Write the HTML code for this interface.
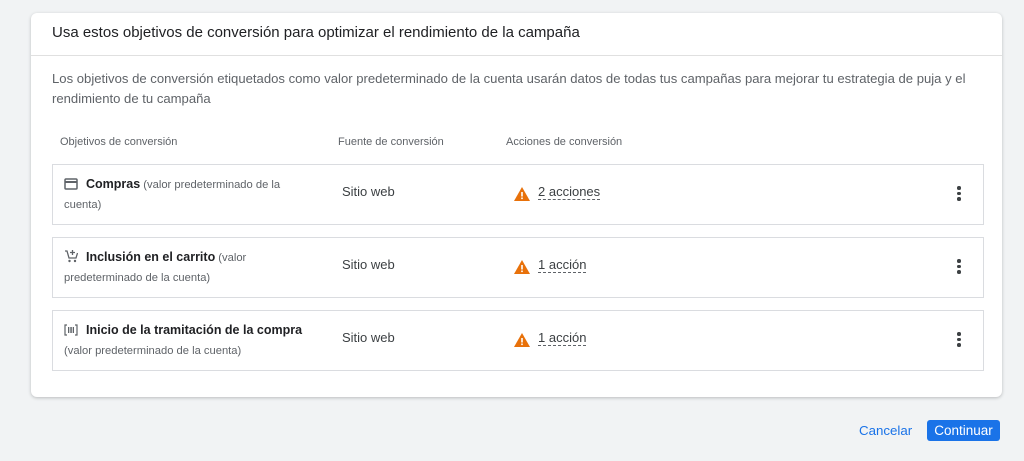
<!DOCTYPE html>
<html><head><meta charset="utf-8"><style>
*{margin:0;padding:0;box-sizing:border-box}
body{width:1024px;height:461px;background:#f1f3f4;font-family:"Liberation Sans",Arial,sans-serif;position:relative;overflow:hidden;color:#202124}
.card{position:absolute;left:31px;top:13px;width:971px;height:384px;background:#fff;border-radius:6px;box-shadow:0 1px 3px rgba(60,64,67,.3)}
.hdr{position:absolute;left:21px;top:11px;font-size:15px;color:#202124}
.sep{position:absolute;left:0;right:0;top:42px;border-top:1px solid #e0e0e0}
.desc{position:absolute;left:21px;top:56px;width:940px;font-size:13.1px;line-height:20px;color:#5f6368;white-space:nowrap}
.ch{position:absolute;top:123px;font-size:11px;color:#5f6368}
.row{position:absolute;left:21px;width:932px;height:61px;border:1px solid #dadce0}
.t{position:absolute;left:11px;top:9px;width:248px;font-size:11.2px;line-height:20px;color:#5f6368}
.t b{font-weight:bold;font-size:12.5px;color:#202124}
.src{position:absolute;left:289px;top:19px;font-size:13px;color:#3c4043}
.warn{position:absolute;left:461px;top:22px}
.act{position:absolute;left:485px;top:19px;font-size:13px;color:#3c4043;border-bottom:1px dashed #5f6368;line-height:15px}
.dots{position:absolute;left:904px;top:21px;width:4px}
.dots i{display:block;width:3.5px;height:3.5px;background:#3c4043;border-radius:50%;margin-bottom:2.2px}
.ic{display:inline-block;vertical-align:-2px;margin-right:8px}
</style></head><body>
<div class="card">
<div class="hdr">Usa estos objetivos de conversión para optimizar el rendimiento de la campaña</div>
<div class="sep"></div>
<div class="desc">Los objetivos de conversión etiquetados como valor predeterminado de la cuenta usarán datos de todas tus campañas para mejorar tu estrategia de puja y el<br>rendimiento de tu campaña</div>
<div class="ch" style="left:29px">Objetivos de conversión</div>
<div class="ch" style="left:307px">Fuente de conversión</div>
<div class="ch" style="left:475px">Acciones de conversión</div>

<div class="row" style="top:151px">
<div class="t"><svg class="ic" width="14" height="12" viewBox="0 0 14 12"><rect x="1" y="1" width="12" height="10" rx="1" fill="none" stroke="#5f6368" stroke-width="1.5"/><rect x="1" y="3" width="12" height="2" fill="#5f6368"/></svg><b>Compras</b> (valor predeterminado de la cuenta)</div>
<div class="src">Sitio web</div>
<svg class="warn" width="16" height="14" viewBox="0 0 16 14"><path d="M8 0L16 14H0Z" fill="#e8710a"/><rect x="7.2" y="5" width="1.6" height="4.5" fill="#fff"/><rect x="7.2" y="10.5" width="1.6" height="1.6" fill="#fff"/></svg>
<div class="act">2 acciones</div>
<div class="dots"><i></i><i></i><i></i></div>
</div>

<div class="row" style="top:224px">
<div class="t"><svg class="ic" width="14" height="14" viewBox="0 0 14 14"><path d="M1 2h2l2 7h7l1.5-5" fill="none" stroke="#5f6368" stroke-width="1.3"/><circle cx="5.5" cy="12" r="1.2" fill="#5f6368"/><circle cx="11" cy="12" r="1.2" fill="#5f6368"/><path d="M8.5 1v5M6 3.5h5" stroke="#5f6368" stroke-width="1.3"/></svg><b>Inclusión en el carrito</b> (valor predeterminado de la cuenta)</div>
<div class="src">Sitio web</div>
<svg class="warn" width="16" height="14" viewBox="0 0 16 14"><path d="M8 0L16 14H0Z" fill="#e8710a"/><rect x="7.2" y="5" width="1.6" height="4.5" fill="#fff"/><rect x="7.2" y="10.5" width="1.6" height="1.6" fill="#fff"/></svg>
<div class="act">1 acción</div>
<div class="dots"><i></i><i></i><i></i></div>
</div>

<div class="row" style="top:297px">
<div class="t"><svg class="ic" width="14" height="12" viewBox="0 0 14 12"><path d="M3 1H1v10h2M11 1h2v10h-2" fill="none" stroke="#5f6368" stroke-width="1.2"/><rect x="4" y="3" width="1.3" height="6" fill="#5f6368"/><rect x="6.3" y="3" width="1.5" height="6" fill="#5f6368"/><rect x="8.7" y="3" width="1.3" height="6" fill="#5f6368"/></svg><b>Inicio de la tramitación de la compra</b> (valor predeterminado de la cuenta)</div>
<div class="src">Sitio web</div>
<svg class="warn" width="16" height="14" viewBox="0 0 16 14"><path d="M8 0L16 14H0Z" fill="#e8710a"/><rect x="7.2" y="5" width="1.6" height="4.5" fill="#fff"/><rect x="7.2" y="10.5" width="1.6" height="1.6" fill="#fff"/></svg>
<div class="act">1 acción</div>
<div class="dots"><i></i><i></i><i></i></div>
</div>
</div>
<div style="position:absolute;left:859px;top:423px;font-size:13.3px;color:#1a73e8">Cancelar</div>
<div style="position:absolute;left:927px;top:420px;width:73px;height:21px;background:#1a73e8;border-radius:3px;color:#fff;font-size:13.5px;text-align:center;line-height:21px">Continuar</div>
</body></html>
